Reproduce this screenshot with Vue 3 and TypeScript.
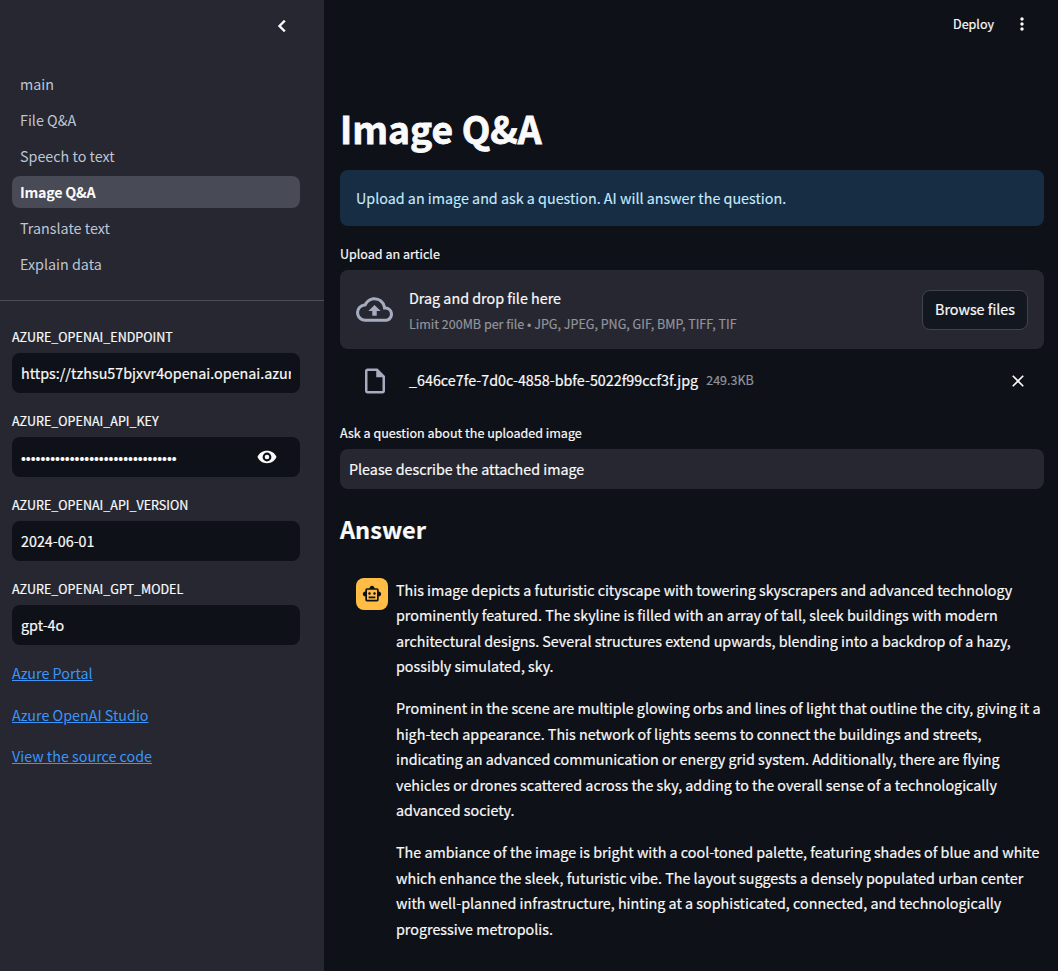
<script setup lang="ts">
interface Page { name: string; active?: boolean }
interface Field { label: string; value: string; secret?: boolean }

const pages: Page[] = [
  { name: 'main' },
  { name: 'File Q&A' },
  { name: 'Speech to text' },
  { name: 'Image Q&A', active: true },
  { name: 'Translate text' },
  { name: 'Explain data' },
]

const fields: Field[] = [
  { label: 'AZURE_OPENAI_ENDPOINT', value: 'https://tzhsu57bjxvr4openai.openai.azur' },
  { label: 'AZURE_OPENAI_API_KEY', value: '•'.repeat(32), secret: true },
  { label: 'AZURE_OPENAI_API_VERSION', value: '2024-06-01' },
  { label: 'AZURE_OPENAI_GPT_MODEL', value: 'gpt-4o' },
]

const links: string[] = ['Azure Portal', 'Azure OpenAI Studio', 'View the source code']

const answer: string[][] = [
  [
    'This image depicts a futuristic cityscape with towering skyscrapers and advanced technology',
    'prominently featured. The skyline is filled with an array of tall, sleek buildings with modern',
    'architectural designs. Several structures extend upwards, blending into a backdrop of a hazy,',
    'possibly simulated, sky.',
  ],
  [
    'Prominent in the scene are multiple glowing orbs and lines of light that outline the city, giving it a',
    'high-tech appearance. This network of lights seems to connect the buildings and streets,',
    'indicating an advanced communication or energy grid system. Additionally, there are flying',
    'vehicles or drones scattered across the sky, adding to the overall sense of a technologically',
    'advanced society.',
  ],
  [
    'The ambiance of the image is bright with a cool-toned palette, featuring shades of blue and white',
    'which enhance the sleek, futuristic vibe. The layout suggests a densely populated urban center',
    'with well-planned infrastructure, hinting at a sophisticated, connected, and technologically',
    'progressive metropolis.',
  ],
]
</script>

<template>
  <div class="app">
    <aside class="sidebar">
      <div class="side-head">
        <svg class="chevron" viewBox="0 0 24 24" width="24" height="24"><path d="M15.41 7.41 14 6l-6 6 6 6 1.41-1.41L10.83 12z" /></svg>
      </div>
      <nav class="nav">
        <a v-for="p in pages" :key="p.name" class="nav-item" :class="{ active: p.active }">{{ p.name }}</a>
      </nav>
      <div class="side-body">
        <div v-for="f in fields" :key="f.label" class="field">
          <div class="label">{{ f.label }}</div>
          <div class="input">
            <span class="value">{{ f.value }}</span>
            <svg v-if="f.secret" class="eye" viewBox="0 0 20 14" width="20" height="14"><path fill-rule="evenodd" d="M10 .8C5.4 .8 2.1 3.3.5 7c1.6 3.7 4.9 6.2 9.500 6.200s7.900-2.500 9.500-6.200C17.900 3.300 14.600.8 10 .8zM10 2.600a4.400 4.400 0 1 1 0 8.800 4.400 4.400 0 0 1 0-8.800zM10 4.700a2.300 2.300 0 1 0 0 4.600 2.300 2.300 0 0 0 0-4.600z" /></svg>
          </div>
        </div>
        <div class="links">
          <p v-for="l in links" :key="l"><a>{{ l }}</a></p>
        </div>
      </div>
    </aside>

    <main class="main">
      <header class="toolbar">
        <span class="deploy">Deploy</span>
        <svg viewBox="0 0 24 24" width="20" height="20"><path d="M12 8c1.1 0 2-.9 2-2s-.9-2-2-2-2 .9-2 2 .9 2 2 2zm0 2c-1.1 0-2 .9-2 2s.9 2 2 2 2-.9 2-2-.9-2-2-2zm0 6c-1.1 0-2 .9-2 2s.9 2 2 2 2-.9 2-2-.9-2-2-2z" /></svg>
      </header>

      <h1>Image Q&amp;A</h1>
      <div class="alert">Upload an image and ask a question. AI will answer the question.</div>

      <div class="label upload-label">Upload an article</div>
      <section class="dropzone">
        <svg class="cloud" viewBox="0 0 24 24" width="37" height="37"><path d="M19.35 10.04A7.49 7.49 0 0 0 12 4C9.11 4 6.6 5.64 5.35 8.04A5.994 5.994 0 0 0 0 14c0 3.31 2.69 6 6 6h13c2.76 0 5-2.24 5-5 0-2.64-2.05-4.78-4.65-4.96zM19 18H6c-2.21 0-4-1.79-4-4 0-2.05 1.53-3.76 3.56-3.97l1.07-.11.5-.95A5.469 5.469 0 0 1 12 6c2.62 0 4.88 1.86 5.39 4.43l.3 1.5 1.53.11A2.98 2.98 0 0 1 22 15c0 1.65-1.35 3-3 3zM8 13h2.55v3h2.9v-3H16l-4-4z" /></svg>
        <div class="drop-text">
          <span class="drop-title">Drag and drop file here</span>
          <span class="small">Limit 200MB per file • JPG, JPEG, PNG, GIF, BMP, TIFF, TIF</span>
        </div>
        <button class="browse">Browse files</button>
      </section>

      <div class="file">
        <svg class="doc" viewBox="0 0 24 24" width="30" height="30"><path d="M6 2c-1.1 0-1.99.9-1.99 2L4 20c0 1.1.89 2 1.99 2H18c1.1 0 2-.9 2-2V8l-6-6H6zm0 18V4h7v5h5v11H6z" /></svg>
        <span class="file-name">_646ce7fe-7d0c-4858-bbfe-5022f99ccf3f.jpg</span>
        <span class="small file-size">249.3KB</span>
        <svg class="close" viewBox="0 0 24 24" width="20" height="20"><path d="M19 6.41 17.59 5 12 10.59 6.41 5 5 6.41 10.59 12 5 17.59 6.41 19 12 13.41 17.59 19 19 17.59 13.41 12z" /></svg>
      </div>

      <div class="label ask-label">Ask a question about the uploaded image</div>
      <div class="input question"><span class="value">Please describe the attached image</span></div>

      <h2>Answer</h2>
      <article class="message">
        <div class="avatar">
          <svg viewBox="0 0 24 24" width="20" height="20"><path d="M20 9V7c0-1.1-.9-2-2-2h-3c0-1.66-1.34-3-3-3S9 3.34 9 5H6c-1.1 0-2 .9-2 2v2c-1.66 0-3 1.34-3 3s1.34 3 3 3v4c0 1.1.9 2 2 2h12c1.1 0 2-.9 2-2v-4c1.66 0 3-1.34 3-3s-1.34-3-3-3zm-2 10H6V7h12v12zM9 13c-.83 0-1.5-.67-1.5-1.5S8.17 10 9 10s1.5.67 1.5 1.5S9.83 13 9 13zm7.5-1.5c0 .83-.67 1.5-1.5 1.5s-1.5-.67-1.5-1.5.67-1.5 1.5-1.5 1.5.67 1.5 1.5zM8 15h8v2H8z" /></svg>
        </div>
        <div class="answer">
          <p v-for="(para, i) in answer" :key="i">
            <span v-for="line in para" :key="line" class="line">{{ line }}</span>
          </p>
        </div>
      </article>
    </main>
  </div>
</template>

<style>
body {
  margin: 0;
  background: #0e1117;
}
</style>

<style scoped>
.app {
  display: flex;
  height: 971px;
  overflow: hidden;
  background: #0e1117;
  color: #fafafa;
  font-family: 'Noto Sans CJK JP', 'Noto Sans', sans-serif;
  font-size: 14.32px;
  line-height: 25.6px;
  white-space: nowrap;
  -webkit-text-stroke: 0.2px currentColor;
}
svg { display: block; flex: none; fill: currentColor; }
p { margin: 0; }

.sidebar { width: 324px; flex: none; background: #262730; }
.side-head { height: 68px; display: flex; justify-content: flex-end; padding: 14px 30px 0 0; box-sizing: border-box; }
.chevron { stroke: currentColor; stroke-width: 0.4px; }
.nav { display: flex; flex-direction: column; gap: 4px; padding: 0 24px 20px 12px; border-bottom: 1px solid #4c4d56; }
.nav-item { height: 32px; line-height: 32px; padding-left: 8px; border-radius: 8px; color: #bfc5d3; -webkit-text-stroke-width: 0; }
.nav-item.active { background: #484a55; color: #fafafa; font-weight: 700; letter-spacing: -0.25px; }
.side-body { padding: 25px 24px 0 12px; }

.label { height: 21px; line-height: 21px; font-size: 12.54px; }
.field { margin-bottom: 17px; }
.input {
  height: 40px; margin-top: 6px; padding: 0 9px; border-radius: 8px; box-sizing: border-box;
  display: flex; align-items: center; background: #0e1117;
}
.value { flex: 1; overflow: hidden; }
.eye { margin-right: 14px; }
.links { display: flex; flex-direction: column; gap: 16px; margin-top: -2px; -webkit-text-stroke-width: 0; }
.links a { color: #3a96fa; text-decoration: underline; }

.main { flex: 1; padding: 0 14px 0 16px; }
.toolbar { height: 48px; display: flex; align-items: center; justify-content: flex-end; gap: 18px; padding-right: 12px; font-size: 12.54px; }
h1 { margin: 54px 0 0; height: 68px; line-height: 53px; font-size: 37.2px; font-weight: 700; -webkit-text-stroke-width: 0.8px; }
.alert { height: 56px; line-height: 56px; padding-left: 16px; border-radius: 8px; background: #172d43; color: #c7ebff; -webkit-text-stroke-width: 0.1px; }
.upload-label { margin-top: 17px; }
.dropzone { height: 79px; margin-top: 6px; padding: 0 16px; box-sizing: border-box; display: flex; align-items: center; border-radius: 8px; background: #262730; }
.cloud, .doc { color: #a6abc0; }
.drop-text { flex: 1; margin-left: 16px; padding-top: 2px; display: flex; flex-direction: column; }
.small { font-size: 12.54px; color: #93949a; }
.browse {
  width: 106px; height: 40px; padding: 0 0 2px; border: 1px solid #41434c; border-radius: 8px;
  background: #131720; color: inherit; font: inherit;
}
.file { height: 62px; display: flex; align-items: center; padding: 0 16px 0 19.5px; }
.doc, .close { margin-top: 2px; }
.file-name { margin-left: 19.5px; padding-bottom: 1px; }
.file-size { margin-left: 8px; flex: 1; }
.ask-label { margin-top: 11px; }
.question { background: #262730; }
h2 { margin: 23px 0 0; height: 66px; line-height: 34px; font-size: 23.6px; font-weight: 700; }
.message { display: flex; gap: 8px; padding-left: 16px; }
.avatar { width: 32px; height: 32px; flex: none; display: grid; place-items: center; border-radius: 8px; background: #ffbd45; color: #0e1117; }
.answer { display: flex; flex-direction: column; gap: 16px; margin-top: -1.3px; }
.line { display: block; }
</style>
